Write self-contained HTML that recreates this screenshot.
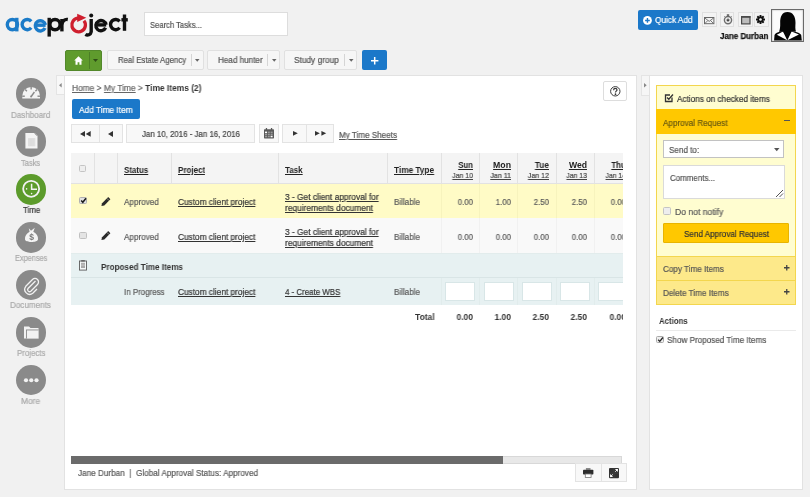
<!DOCTYPE html>
<html><head><meta charset="utf-8"><style>
*{box-sizing:border-box;margin:0;padding:0}
html,body{width:810px;height:497px;overflow:hidden}
body{background:#f1f1f1;font-family:"Liberation Sans",sans-serif;color:#555;position:relative}
.a{position:absolute}
.u{text-decoration:underline}
.t b{-webkit-text-stroke:0}
.t{line-height:12px;white-space:nowrap;transform-origin:0 0;will-change:transform;-webkit-text-stroke:0.2px currentColor}
.r{text-align:right;transform-origin:100% 0}
.c{text-align:center;transform-origin:50% 0}
.b{font-weight:bold}
svg{position:absolute;overflow:visible;will-change:transform}

.cb{background:#f4f4f4;border:1px solid #b9b9b9;border-radius:1.5px}
</style></head><body>
<svg style="left:0;top:0" width="140" height="45" viewBox="0 0 140 45">
<g fill="none" stroke="#1b7bc8" stroke-width="3.4">
<circle cx="12.4" cy="24.6" r="5.1"/>
<line x1="16.8" y1="17.8" x2="16.8" y2="31.4"/>
<path d="M31.2 21.4 A5.1 5.1 0 1 0 31.2 27.8"/>
<path d="M45 28 A5.1 5.1 0 1 1 45.4 24.9" />
<line x1="35.2" y1="25.2" x2="45.6" y2="25.2"/>
</g>
<g fill="none" stroke="#111" stroke-width="3.4">
<line x1="49.2" y1="17.8" x2="49.2" y2="36.6"/>
<circle cx="55" cy="24.6" r="5.1"/>
<line x1="61.9" y1="19" x2="61.9" y2="31.4"/>
<path d="M61.9 24.5 A5 5 0 0 1 67.8 19.5"/>
<line x1="91.2" y1="19" x2="91.2" y2="32.3"/>
<path d="M91.2 32 A3.8 3.8 0 0 1 85.4 34.4"/>
<path d="M105.6 27.8 A5.1 5.1 0 1 1 106 24.8" />
<line x1="95.8" y1="24.9" x2="106.2" y2="24.9"/>
<path d="M119.6 21.4 A5.1 5.1 0 1 0 119.6 27.8"/>
<line x1="124.5" y1="14.5" x2="124.5" y2="30.8"/>
<line x1="121.4" y1="19.8" x2="127.8" y2="19.8"/>
</g>
<circle cx="91.2" cy="15.6" r="2" fill="#111"/>
<path d="M83.9 20.7 A6.8 6.8 0 1 1 78.2 18.2" fill="none" stroke="#cf1f2e" stroke-width="3.3"/>
<path d="M77.2 13.8 L86.3 17.8 L77.2 21.9 Z" fill="#cf1f2e"/>
</svg>
<div class="a" style="left:144px;top:12px;width:143.5px;height:24px;background:#fff;border:1px solid #ddd"></div>
<div class="a t" style="left:150.40px;top:19.00px;font-size:8.7px;color:#555;transform:scaleX(0.8767);">Search Tasks...</div>
<div class="a" style="left:638.2px;top:9.6px;width:60.2px;height:20px;background:#1b78c9;border-radius:2px"></div>
<svg style="left:643.1px;top:16.1px" width="9" height="9" viewBox="0 0 9 9"><circle cx="4.45" cy="4.45" r="4.4" fill="#fff"/><path d="M4.45 2.1v4.7M2.1 4.45h4.7" stroke="#1b78c9" stroke-width="1.4"/></svg>
<div class="a t" style="left:655.30px;top:14.00px;font-size:9.2px;color:#fff;transform:scaleX(0.8966);">Quick Add</div>
<div class="a" style="left:702.2px;top:12.2px;width:14.8px;height:14.8px;background:#f3f3f3;border:1px solid #e0e0e0"></div>
<div class="a" style="left:719.6px;top:12.2px;width:14.8px;height:14.8px;background:#f3f3f3;border:1px solid #e0e0e0"></div>
<div class="a" style="left:737.8px;top:12.2px;width:14.8px;height:14.8px;background:#f3f3f3;border:1px solid #e0e0e0"></div>
<div class="a" style="left:754px;top:12.2px;width:14.8px;height:14.8px;background:#f3f3f3;border:1px solid #e0e0e0"></div>
<svg style="left:704.3px;top:16.5px" width="10.4" height="7.2" viewBox="0 0 10.4 7.2"><rect x="0.5" y="0.5" width="9.4" height="6.2" fill="none" stroke="#6a6a6a" stroke-width="1"/><path d="M0.6 0.8L5.2 4.4L9.8 0.8M0.8 6.6L3.9 3.5M9.6 6.6L6.5 3.5" fill="none" stroke="#6a6a6a" stroke-width="0.9"/></svg>
<svg style="left:722.5px;top:14.3px" width="10" height="11" viewBox="0 0 10 11"><circle cx="5" cy="6.1" r="3.6" fill="none" stroke="#6f6f6f" stroke-width="1.4"/><circle cx="5" cy="6.1" r="1.5" fill="#444"/><rect x="3.8" y="0.3" width="2.4" height="1.4" fill="#555"/><rect x="4.5" y="1.2" width="1" height="1.5" fill="#555"/><path d="M1.2 2.3l1.2 1.1M8.8 2.3l-1.2 1.1" stroke="#777" stroke-width="0.9"/><path d="M5 4.5V6.1" stroke="#ddd" stroke-width="0.5"/></svg>
<svg style="left:740.5px;top:15.5px" width="9.6" height="8.5" viewBox="0 0 9.6 8.5"><rect x="0.6" y="0.9" width="8.4" height="7" fill="#bdbdbd" stroke="#4a4a4a" stroke-width="1.2"/><rect x="0" y="0" width="9.6" height="1.6" fill="#4a4a4a"/></svg>
<svg style="left:756.4px;top:15.2px" width="9" height="9" viewBox="0 0 10 10"><g fill="#111"><circle cx="5" cy="5" r="3.4"/><rect x="3.9" y="0" width="2.2" height="10" rx="0.4"/><rect x="0" y="3.9" width="10" height="2.2" rx="0.4"/><rect x="3.9" y="0" width="2.2" height="10" rx="0.4" transform="rotate(45 5 5)"/><rect x="3.9" y="0" width="2.2" height="10" rx="0.4" transform="rotate(-45 5 5)"/></g><circle cx="5" cy="5" r="1.4" fill="#f3f3f3"/></svg>
<div class="a t" style="left:719.80px;top:31.00px;font-size:8.2px;color:#111;transform:scaleX(0.9765);font-weight:bold;-webkit-text-stroke:0;-webkit-text-stroke:0.25px #111;">Jane Durban</div>
<div class="a" style="left:771.1px;top:8.9px;width:33.3px;height:33px;background:#fbfbfb;border:1.4px solid #6a6a6a;box-shadow:inset 0 0 1.5px #888"></div>
<svg style="left:771.1px;top:8.9px" width="33.3" height="33" viewBox="0 0 33.3 33">
<path d="M3.1 31.4 L3.5 26 C4 24.5 6 23.5 9.5 22.5 L23.5 22.5 C27 23.5 29.5 24.5 30.2 26 L30.8 31.4 Z" fill="#050505"/>
<path d="M5.8 25.8 L12 22.6 L16.2 31.2 Z M28 25.5 L20.6 22.6 L16.4 31.2 Z" fill="#fff"/>
<path d="M16.5 3.1 C11 3.1 9 8 9.2 14 C9.3 18 9 20.5 8 22.8 L12.3 22.8 L16.2 28.6 L20.2 22.8 L25 22.6 C24 20 24.4 17 24.5 14 C24.7 8 22 3.1 16.5 3.1 Z" fill="#050505"/>
</svg>
<div class="a" style="left:65.2px;top:50px;width:37px;height:20.5px;background:#5f9b2d;border:1px solid #52882a;border-radius:2px"></div>
<div class="a" style="left:89.3px;top:52px;width:0.8px;height:16.5px;background:#4b7f25"></div>
<svg style="left:73.5px;top:55.5px" width="9" height="9" viewBox="0 0 9 9"><path d="M4.5 0.3L0.2 4.4H1.5V8.8H3.6V6.2H5.4V8.8H7.5V4.4H8.8Z" fill="#fff"/></svg>
<svg style="left:93px;top:59px" width="5" height="3"><path d="M0 0H5L2.5 3Z" fill="#2f4f17"/></svg>
<div class="a" style="left:107.2px;top:50px;width:96.60000000000001px;height:20.4px;background:#f6f6f6;border:1px solid #e0e0e0;border-radius:2px"></div>
<div class="a" style="left:191.2px;top:54px;width:0.8px;height:12px;background:#d5d5d5"></div>
<svg style="left:195.3px;top:59px" width="5" height="3"><path d="M0 0H4.5L2.25 2.8Z" fill="#666"/></svg>
<div class="a t" style="left:117.70px;top:54.00px;font-size:8.7px;color:#555;transform:scaleX(0.8982);">Real Estate Agency</div>
<div class="a" style="left:207px;top:50px;width:73.39999999999998px;height:20.4px;background:#f6f6f6;border:1px solid #e0e0e0;border-radius:2px"></div>
<div class="a" style="left:267.3px;top:54px;width:0.8px;height:12px;background:#d5d5d5"></div>
<svg style="left:271.65000000000003px;top:59px" width="5" height="3"><path d="M0 0H4.5L2.25 2.8Z" fill="#666"/></svg>
<div class="a t" style="left:218.10px;top:54.00px;font-size:8.7px;color:#555;transform:scaleX(0.9335);">Head hunter</div>
<div class="a" style="left:284.4px;top:50px;width:72.90000000000003px;height:20.4px;background:#f6f6f6;border:1px solid #e0e0e0;border-radius:2px"></div>
<div class="a" style="left:344.4px;top:54px;width:0.8px;height:12px;background:#d5d5d5"></div>
<svg style="left:348.65000000000003px;top:59px" width="5" height="3"><path d="M0 0H4.5L2.25 2.8Z" fill="#666"/></svg>
<div class="a t" style="left:294.40px;top:54.00px;font-size:8.7px;color:#555;transform:scaleX(0.9571);">Study group</div>
<div class="a" style="left:362.2px;top:50px;width:24.5px;height:20px;background:#1b78c9;border-radius:2px"></div>
<svg style="left:371px;top:56.7px" width="7.4" height="7.4"><path d="M3.7 0v7.4M0 3.7h7.4" stroke="#fff" stroke-width="1.5"/></svg>
<div class="a" style="left:64px;top:75px;width:573px;height:415px;background:#fff;border:1px solid #e2e2e2"></div>
<div class="a" style="left:56.2px;top:75.2px;width:8.3px;height:20.3px;background:#f8f8f8;border:1px solid #e4e4e4;border-right:none"></div>
<svg style="left:59.2px;top:83.3px" width="3" height="4.5"><path d="M2.7 0V4.4L0 2.2Z" fill="#888"/></svg>
<div class="a" style="left:640.9px;top:75.2px;width:8.8px;height:20.5px;background:#f6f6f6;border:1px solid #e4e4e4;border-right:none"></div>
<svg style="left:643.8px;top:83.4px" width="3" height="4.5"><path d="M0 0V4.4L2.7 2.2Z" fill="#888"/></svg>
<div class="a" style="left:649.3px;top:75px;width:153.5px;height:415px;background:#fff;border:1px solid #e2e2e2"></div>
<div class="a" style="left:15.6px;top:78px;width:30.5px;height:30.5px;background:#8a8a8a;border-radius:50%"></div>
<div class="a t" style="left:11.00px;top:109.00px;font-size:8.7px;color:#aaa;transform:scaleX(0.9234);">Dashboard</div>
<div class="a" style="left:15.6px;top:126px;width:30.5px;height:30.5px;background:#8a8a8a;border-radius:50%"></div>
<div class="a t" style="left:21.20px;top:157.00px;font-size:8.7px;color:#aaa;transform:scaleX(0.8634);">Tasks</div>
<div class="a" style="left:15.6px;top:174px;width:30.5px;height:30.5px;background:#5c9b2b;border-radius:50%"></div>
<div class="a t" style="left:22.60px;top:204.00px;font-size:8.7px;color:#333;transform:scaleX(0.9048);">Time</div>
<div class="a" style="left:15.6px;top:222px;width:30.5px;height:30.5px;background:#8a8a8a;border-radius:50%"></div>
<div class="a t" style="left:14.60px;top:252.00px;font-size:8.7px;color:#aaa;transform:scaleX(0.8480);">Expenses</div>
<div class="a" style="left:15.6px;top:269.5px;width:30.5px;height:30.5px;background:#8a8a8a;border-radius:50%"></div>
<div class="a t" style="left:10.40px;top:299.00px;font-size:8.7px;color:#aaa;transform:scaleX(0.9318);">Documents</div>
<div class="a" style="left:15.6px;top:317px;width:30.5px;height:30.5px;background:#8a8a8a;border-radius:50%"></div>
<div class="a t" style="left:16.70px;top:347.00px;font-size:8.7px;color:#aaa;transform:scaleX(0.9069);">Projects</div>
<div class="a" style="left:15.6px;top:364.5px;width:30.5px;height:30.5px;background:#8a8a8a;border-radius:50%"></div>
<div class="a t" style="left:21.10px;top:395.00px;font-size:8.7px;color:#aaa;transform:scaleX(0.9637);">More</div>
<svg style="left:15.6px;top:78px" width="30.5" height="30.5" viewBox="0 0 30.5 30.5">
<path d="M6.3 17.8 A8.85 8.85 0 0 1 24 17.8 V20.6 H6.3 Z" fill="#f4f4f4"/>
<g stroke="#8a8a8a" stroke-width="1.4"><line x1="15.15" y1="9" x2="15.15" y2="11.6"/><line x1="9.2" y1="11.6" x2="10.9" y2="13.3"/><line x1="21.1" y1="11.6" x2="19.4" y2="13.3"/><line x1="6.2" y1="18.2" x2="8.8" y2="18.2"/><line x1="24.1" y1="18.2" x2="21.5" y2="18.2"/><line x1="15.2" y1="18.5" x2="18.4" y2="14"/></g>
<circle cx="15.1" cy="18.6" r="1" fill="#8a8a8a"/>
</svg>
<svg style="left:15.6px;top:126px" width="30.5" height="30.5" viewBox="0 0 30.5 30.5">
<path d="M9.4 6.9 H18.7 L21.5 9.7 V22.5 H9.4 Z" fill="#f4f4f4"/>
<path d="M18.5 7.3 L21.1 9.9" stroke="#999" stroke-width="0.9"/>
<rect x="12.4" y="12.2" width="6.8" height="8" fill="#d2d2d2"/>
<g stroke="#f4f4f4" stroke-width="0.45"><line x1="13.6" y1="12.2" x2="13.6" y2="20.2"/><line x1="14.8" y1="12.2" x2="14.8" y2="20.2"/><line x1="16" y1="12.2" x2="16" y2="20.2"/><line x1="17.2" y1="12.2" x2="17.2" y2="20.2"/><line x1="18.4" y1="12.2" x2="18.4" y2="20.2"/></g>
</svg>
<svg style="left:15.6px;top:174px" width="30.5" height="30.5" viewBox="0 0 30.5 30.5">
<circle cx="15.15" cy="14.8" r="8" fill="none" stroke="#f2f2f2" stroke-width="1.8"/>
<path d="M15.6 9.8 V15.3 H21" fill="none" stroke="#f2f2f2" stroke-width="1.5"/>
<circle cx="15.6" cy="19.6" r="0.8" fill="#f2f2f2"/><circle cx="10.6" cy="14.9" r="0.8" fill="#f2f2f2"/>
</svg>
<svg style="left:15.6px;top:222px" width="30.5" height="30.5" viewBox="0 0 30.5 30.5">
<path d="M12.8 6.3 L15 8.8 L18.8 5.8 L17.3 9.8 C20.5 11.3 22.3 14.5 22 17.3 C21.7 19.3 19 20 15.4 20 C11.8 20 9.2 19.3 9 17.3 C8.7 14.5 10.5 11.3 13.6 9.8 Z" fill="#f4f4f4"/>
<text x="15.5" y="17.6" font-family="Liberation Sans" font-weight="bold" font-size="8.5" fill="#7a7a7a" text-anchor="middle">$</text>
</svg>
<svg style="left:15.6px;top:269.5px" width="30.5" height="30.5" viewBox="0 0 30.5 30.5">
<path d="M19.5 11 L12 18.5 A2 2 0 0 0 14.8 21.3 L21.5 14.5 A3.5 3.5 0 0 0 16.5 9.5 L9.8 16.3 A5 5 0 0 0 16.8 23.3 L21 19" fill="none" stroke="#f2f2f2" stroke-width="1.3" transform="rotate(0)"/>
</svg>
<svg style="left:15.6px;top:317px" width="30.5" height="30.5" viewBox="0 0 30.5 30.5">
<path d="M8 9.5 H13 L14.5 11 H22.5 V21.5 H8 Z" fill="#f2f2f2"/>
<rect x="10" y="12.5" width="12.5" height="9" fill="#8a8a8a"/>
<rect x="10.9" y="13.4" width="11.6" height="8.1" fill="#f2f2f2"/>
</svg>
<svg style="left:15.6px;top:364.5px" width="30.5" height="30.5" viewBox="0 0 30.5 30.5">
<circle cx="10" cy="15.25" r="2.1" fill="#f2f2f2"/><circle cx="15.25" cy="15.25" r="2.1" fill="#f2f2f2"/><circle cx="20.5" cy="15.25" r="2.1" fill="#f2f2f2"/>
</svg>
<div class="a t" style="left:71.8px;top:82px;font-size:8.7px;color:#666;transform:scaleX(0.9654)"><span class="u">Home</span> &gt; <span class="u">My Time</span> &gt; <b style="color:#333">Time Items (2)</b></div>
<div class="a" style="left:602.7px;top:80.5px;width:24.6px;height:20px;background:#fff;border:1px solid #ddd;border-radius:2px"></div>
<svg style="left:609.5px;top:85.6px" width="11" height="11" viewBox="0 0 11 11"><circle cx="5.3" cy="5.3" r="4.7" fill="none" stroke="#3a3a3a" stroke-width="1"/><path d="M3.6 4.2 C3.6 2.9 4.3 2.4 5.3 2.4 C6.3 2.4 7 3 7 3.9 C7 5.1 5.4 5.2 5.4 6.6" fill="none" stroke="#3a3a3a" stroke-width="1.25"/><circle cx="5.5" cy="8.2" r="0.85" fill="#333"/></svg>
<div class="a" style="left:71.6px;top:99.2px;width:68.1px;height:20.2px;background:#1b78c9;border-radius:2px"></div>
<div class="a t" style="left:78.80px;top:104.00px;font-size:8.7px;color:#fff;transform:scaleX(0.9575);">Add Time Item</div>
<div class="a" style="left:71.2px;top:124.2px;width:51.5px;height:18.5px;background:#f8f8f8;border:1px solid #e3e3e3"></div>
<div class="a" style="left:99.2px;top:124.2px;width:1px;height:18.5px;background:#e3e3e3"></div>
<svg style="left:79.5px;top:130.7px" width="11" height="6"><path d="M0 2.9L5 0V5.8Z M5.7 2.9L10.7 0V5.8Z" fill="#333"/></svg>
<svg style="left:108px;top:130.5px" width="6" height="6"><path d="M0 3L5 0V6Z" fill="#333"/></svg>
<div class="a" style="left:126.2px;top:124.2px;width:129px;height:18.5px;background:#f8f8f8;border:1px solid #e3e3e3"></div>
<div class="a t" style="left:141.80px;top:128.00px;font-size:8.7px;color:#444;transform:scaleX(0.9054);">Jan 10, 2016 - Jan 16, 2016</div>
<div class="a" style="left:258.9px;top:124.2px;width:19.8px;height:18.5px;background:#f8f8f8;border:1px solid #e3e3e3"></div>
<svg style="left:264.2px;top:128.3px" width="10" height="10.4" viewBox="0 0 10 10.4"><rect x="0" y="1.2" width="10" height="9.2" rx="0.6" fill="#5a5a5a"/><rect x="1.8" y="0" width="1.3" height="2.4" fill="#5a5a5a"/><rect x="6.9" y="0" width="1.3" height="2.4" fill="#5a5a5a"/><rect x="1.0" y="3.6" width="2" height="1.5" fill="#fff"/><rect x="3.8" y="3.6" width="2" height="1.5" fill="#9a9a9a"/><rect x="6.6" y="3.6" width="2" height="1.5" fill="#9a9a9a"/><rect x="1.0" y="5.7" width="2" height="1.5" fill="#9a9a9a"/><rect x="3.8" y="5.7" width="2" height="1.5" fill="#9a9a9a"/><rect x="6.6" y="5.7" width="2" height="1.5" fill="#9a9a9a"/><rect x="1.0" y="7.8" width="2" height="1.5" fill="#9a9a9a"/><rect x="3.8" y="7.8" width="2" height="1.5" fill="#9a9a9a"/><rect x="6.6" y="7.8" width="2" height="1.5" fill="#fff"/></svg>
<div class="a" style="left:282.2px;top:124.2px;width:51.7px;height:18.5px;background:#f8f8f8;border:1px solid #e3e3e3"></div>
<div class="a" style="left:306.4px;top:124.2px;width:1px;height:18.5px;background:#e3e3e3"></div>
<svg style="left:292.8px;top:131.2px" width="5" height="5"><path d="M4.8 2.3L0 0V4.7Z" fill="#333"/></svg>
<svg style="left:315px;top:131.2px" width="12" height="5"><path d="M4.8 2.3L0 0V4.7Z M11.2 2.3L6.4 0V4.7Z" fill="#333"/></svg>
<div class="a t" style="left:338.60px;top:129.00px;font-size:8.7px;color:#555;transform:scaleX(0.9316);text-decoration:underline;">My Time Sheets</div>
<div class="a" style="left:71px;top:153.2px;width:552px;height:30.4px;background:#f4f4f4;border-bottom:1px solid #e2e2e2"></div>
<div class="a" style="left:71px;top:183.6px;width:552px;height:34.8px;background:#fffbc6"></div>
<div class="a" style="left:71px;top:218.4px;width:552px;height:34.9px;background:#f9f9f9"></div>
<div class="a" style="left:71px;top:253.3px;width:552px;height:24.9px;background:#e7f1f2;border-top:1px solid #e2ecec;border-bottom:1px solid #d9e5e6"></div>
<div class="a" style="left:71px;top:278.2px;width:552px;height:26.4px;background:#e7f1f2"></div>
<div class="a" style="left:94.3px;top:153.2px;width:1px;height:30.4px;background:#e2e2e2"></div>
<div class="a" style="left:117.1px;top:153.2px;width:1px;height:30.4px;background:#e2e2e2"></div>
<div class="a" style="left:170.6px;top:153.2px;width:1px;height:30.4px;background:#e2e2e2"></div>
<div class="a" style="left:278.4px;top:153.2px;width:1px;height:30.4px;background:#e2e2e2"></div>
<div class="a" style="left:387.1px;top:153.2px;width:1px;height:30.4px;background:#e2e2e2"></div>
<div class="a" style="left:441.2px;top:153.2px;width:1px;height:30.4px;background:#e2e2e2"></div>
<div class="a" style="left:479.4px;top:153.2px;width:1px;height:30.4px;background:#e2e2e2"></div>
<div class="a" style="left:517.4px;top:153.2px;width:1px;height:30.4px;background:#e2e2e2"></div>
<div class="a" style="left:555.8px;top:153.2px;width:1px;height:30.4px;background:#e2e2e2"></div>
<div class="a" style="left:594.2px;top:153.2px;width:1px;height:30.4px;background:#e2e2e2"></div>
<div class="a" style="left:441.2px;top:183.6px;width:1px;height:34.8px;background:#f7f3bd"></div>
<div class="a" style="left:441.2px;top:218.4px;width:1px;height:34.9px;background:#f1f1f1"></div>
<div class="a" style="left:441.2px;top:278.2px;width:1px;height:26.4px;background:#e1ecec"></div>
<div class="a" style="left:479.4px;top:183.6px;width:1px;height:34.8px;background:#f7f3bd"></div>
<div class="a" style="left:479.4px;top:218.4px;width:1px;height:34.9px;background:#f1f1f1"></div>
<div class="a" style="left:479.4px;top:278.2px;width:1px;height:26.4px;background:#e1ecec"></div>
<div class="a" style="left:517.4px;top:183.6px;width:1px;height:34.8px;background:#f7f3bd"></div>
<div class="a" style="left:517.4px;top:218.4px;width:1px;height:34.9px;background:#f1f1f1"></div>
<div class="a" style="left:517.4px;top:278.2px;width:1px;height:26.4px;background:#e1ecec"></div>
<div class="a" style="left:555.8px;top:183.6px;width:1px;height:34.8px;background:#f7f3bd"></div>
<div class="a" style="left:555.8px;top:218.4px;width:1px;height:34.9px;background:#f1f1f1"></div>
<div class="a" style="left:555.8px;top:278.2px;width:1px;height:26.4px;background:#e1ecec"></div>
<div class="a" style="left:594.2px;top:183.6px;width:1px;height:34.8px;background:#f7f3bd"></div>
<div class="a" style="left:594.2px;top:218.4px;width:1px;height:34.9px;background:#f1f1f1"></div>
<div class="a" style="left:594.2px;top:278.2px;width:1px;height:26.4px;background:#e1ecec"></div>
<div class="a" style="left:78.9px;top:164.8px;width:7.5px;height:7.5px;background:#eee;border:1px solid #c4c4c4;border-radius:1.5px"></div>
<div class="a t" style="left:123.70px;top:164.00px;font-size:8.5px;color:#222;transform:scaleX(0.9316);font-weight:bold;-webkit-text-stroke:0;text-decoration:underline;">Status</div>
<div class="a t" style="left:177.50px;top:164.00px;font-size:8.5px;color:#222;transform:scaleX(0.9439);font-weight:bold;-webkit-text-stroke:0;text-decoration:underline;">Project</div>
<div class="a t" style="left:285.20px;top:164.00px;font-size:8.5px;color:#222;transform:scaleX(0.9390);font-weight:bold;-webkit-text-stroke:0;text-decoration:underline;">Task</div>
<div class="a t" style="left:393.80px;top:164.00px;font-size:8.5px;color:#222;transform:scaleX(0.9720);font-weight:bold;-webkit-text-stroke:0;text-decoration:underline;">Time Type</div>
<div class="a t r" style="left:172.80px;width:300px;top:159.00px;font-size:8.5px;color:#222;transform:scaleX(0.9219);font-weight:bold;-webkit-text-stroke:0;text-decoration:underline;">Sun</div>
<div class="a t r" style="left:172.80px;width:300px;top:170.00px;font-size:7.8px;color:#444;transform:scaleX(0.8881);text-decoration:underline;">Jan 10</div>
<div class="a t r" style="left:210.90px;width:300px;top:159.00px;font-size:8.5px;color:#222;transform:scaleX(1.0249);font-weight:bold;-webkit-text-stroke:0;text-decoration:underline;">Mon</div>
<div class="a t r" style="left:210.90px;width:300px;top:170.00px;font-size:7.8px;color:#444;transform:scaleX(0.9062);text-decoration:underline;">Jan 11</div>
<div class="a t r" style="left:249.10px;width:300px;top:159.00px;font-size:8.5px;color:#222;transform:scaleX(0.9737);font-weight:bold;-webkit-text-stroke:0;text-decoration:underline;">Tue</div>
<div class="a t r" style="left:249.10px;width:300px;top:170.00px;font-size:7.8px;color:#444;transform:scaleX(0.9009);text-decoration:underline;">Jan 12</div>
<div class="a t r" style="left:287.30px;width:300px;top:159.00px;font-size:8.5px;color:#222;transform:scaleX(1.0175);font-weight:bold;-webkit-text-stroke:0;text-decoration:underline;">Wed</div>
<div class="a t r" style="left:287.30px;width:300px;top:170.00px;font-size:7.8px;color:#444;transform:scaleX(0.8838);text-decoration:underline;">Jan 13</div>
<div class="a t r" style="left:325.50px;width:300px;top:159.00px;font-size:8.5px;color:#222;transform:scaleX(0.9501);font-weight:bold;-webkit-text-stroke:0;text-decoration:underline;">Thu</div>
<div class="a t r" style="left:325.50px;width:300px;top:170.00px;font-size:7.8px;color:#444;transform:scaleX(0.8753);text-decoration:underline;">Jan 14</div>
<div class="a" style="left:79.2px;top:197.2px;width:7.7px;height:7.3px;background:#e2e2e2;border:1px solid #b0b0b0;border-radius:1.5px"></div>
<svg style="left:79.7px;top:197.3px" width="7" height="7"><path d="M1.2 3.6L2.8 5.3L6 1.2" fill="none" stroke="#1a1a1a" stroke-width="1.5"/></svg>
<svg style="left:101.2px;top:196.5px" width="10" height="10" viewBox="0 0 10 10"><path d="M0.4 9.1 L1.1 6.2 L7.2 0.1 L9.4 2.3 L3.3 8.4 Z" fill="#2a2a2a"/><path d="M5.9 1.4 L8.1 3.6" stroke="#fffcc8" stroke-width="0.7" opacity="0.7"/></svg>
<div class="a t" style="left:124.00px;top:196.00px;font-size:8.7px;color:#5a5a5a;transform:scaleX(0.9371);">Approved</div>
<div class="a t" style="left:177.50px;top:196.00px;font-size:8.7px;color:#333;transform:scaleX(0.9541);text-decoration:underline;">Custom client project</div>
<div class="a t" style="left:285.20px;top:191.00px;font-size:8.7px;color:#333;transform:scaleX(0.9603);text-decoration:underline;">3 - Get client approval for</div>
<div class="a t" style="left:285.20px;top:202.00px;font-size:8.7px;color:#333;transform:scaleX(0.9640);text-decoration:underline;">requirements document</div>
<div class="a t" style="left:393.80px;top:196.00px;font-size:8.7px;color:#5a5a5a;transform:scaleX(0.9269);">Billable</div>
<div class="a t r" style="left:172.80px;width:300px;top:196.00px;font-size:8.7px;color:#5a5a5a;transform:scaleX(0.8977);">0.00</div>
<div class="a t r" style="left:210.90px;width:300px;top:196.00px;font-size:8.7px;color:#5a5a5a;transform:scaleX(0.8977);">1.00</div>
<div class="a t r" style="left:249.10px;width:300px;top:196.00px;font-size:8.7px;color:#5a5a5a;transform:scaleX(0.8977);">2.50</div>
<div class="a t r" style="left:287.30px;width:300px;top:196.00px;font-size:8.7px;color:#5a5a5a;transform:scaleX(0.8977);">2.50</div>
<div class="a t r" style="left:325.50px;width:300px;top:196.00px;font-size:8.7px;color:#5a5a5a;transform:scaleX(0.8977);">0.00</div>
<div class="a" style="left:79.2px;top:232px;width:7.7px;height:7.3px;background:#e4e4e4;border:1px solid #c0c0c0;border-radius:1.5px"></div>
<svg style="left:101.2px;top:231.3px" width="10" height="10" viewBox="0 0 10 10"><path d="M0.4 9.1 L1.1 6.2 L7.2 0.1 L9.4 2.3 L3.3 8.4 Z" fill="#2a2a2a"/><path d="M5.9 1.4 L8.1 3.6" stroke="#f9f9f9" stroke-width="0.7" opacity="0.7"/></svg>
<div class="a t" style="left:124.00px;top:231.00px;font-size:8.7px;color:#5a5a5a;transform:scaleX(0.9371);">Approved</div>
<div class="a t" style="left:177.50px;top:231.00px;font-size:8.7px;color:#333;transform:scaleX(0.9541);text-decoration:underline;">Custom client project</div>
<div class="a t" style="left:285.20px;top:226.00px;font-size:8.7px;color:#333;transform:scaleX(0.9603);text-decoration:underline;">3 - Get client approval for</div>
<div class="a t" style="left:285.20px;top:237.00px;font-size:8.7px;color:#333;transform:scaleX(0.9640);text-decoration:underline;">requirements document</div>
<div class="a t" style="left:393.80px;top:231.00px;font-size:8.7px;color:#5a5a5a;transform:scaleX(0.9269);">Billable</div>
<div class="a t r" style="left:172.80px;width:300px;top:231.00px;font-size:8.7px;color:#5a5a5a;transform:scaleX(0.8977);">0.00</div>
<div class="a t r" style="left:210.90px;width:300px;top:231.00px;font-size:8.7px;color:#5a5a5a;transform:scaleX(0.8977);">0.00</div>
<div class="a t r" style="left:249.10px;width:300px;top:231.00px;font-size:8.7px;color:#5a5a5a;transform:scaleX(0.8977);">0.00</div>
<div class="a t r" style="left:287.30px;width:300px;top:231.00px;font-size:8.7px;color:#5a5a5a;transform:scaleX(0.8977);">0.00</div>
<div class="a t r" style="left:325.50px;width:300px;top:231.00px;font-size:8.7px;color:#5a5a5a;transform:scaleX(0.8977);">0.00</div>
<svg style="left:79px;top:260.3px" width="8" height="10.6" viewBox="0 0 8 10.6"><rect x="0.5" y="1" width="7" height="9.1" fill="#f4f8f8" stroke="#5a5a5a" stroke-width="0.9"/><rect x="2.2" y="0.2" width="3.6" height="1.3" fill="#5a5a5a"/><rect x="2" y="2.8" width="4" height="5.2" fill="#a8a8a8"/><path d="M2 4.2H6M2 5.6H6" stroke="#e0e0e0" stroke-width="0.4"/></svg>
<div class="a t" style="left:101.10px;top:261.00px;font-size:8.7px;color:#333;transform:scaleX(0.9347);font-weight:bold;-webkit-text-stroke:0;">Proposed Time Items</div>
<div class="a t" style="left:123.60px;top:286.00px;font-size:8.7px;color:#5a5a5a;transform:scaleX(0.9127);">In Progress</div>
<div class="a t" style="left:177.50px;top:286.00px;font-size:8.7px;color:#333;transform:scaleX(0.9541);text-decoration:underline;">Custom client project</div>
<div class="a t" style="left:285.20px;top:286.00px;font-size:8.7px;color:#333;transform:scaleX(0.9094);text-decoration:underline;">4 - Create WBS</div>
<div class="a t" style="left:393.80px;top:286.00px;font-size:8.7px;color:#5a5a5a;transform:scaleX(0.9269);">Billable</div>
<div class="a" style="left:445.3px;top:282.4px;width:30.1px;height:18.4px;background:#fff;border:1px solid #d8e6e7"></div>
<div class="a" style="left:483.5px;top:282.4px;width:30.1px;height:18.4px;background:#fff;border:1px solid #d8e6e7"></div>
<div class="a" style="left:521.7px;top:282.4px;width:30.1px;height:18.4px;background:#fff;border:1px solid #d8e6e7"></div>
<div class="a" style="left:559.9px;top:282.4px;width:30.1px;height:18.4px;background:#fff;border:1px solid #d8e6e7"></div>
<div class="a" style="left:598.1px;top:282.4px;width:30.1px;height:18.4px;background:#fff;border:1px solid #d8e6e7"></div>
<div class="a t" style="left:415.40px;top:311.00px;font-size:8.7px;color:#333;transform:scaleX(0.9734);font-weight:bold;-webkit-text-stroke:0;">Total</div>
<div class="a t r" style="left:172.80px;width:300px;top:311.00px;font-size:8.7px;color:#333;transform:scaleX(0.9686);font-weight:bold;-webkit-text-stroke:0;">0.00</div>
<div class="a t r" style="left:210.90px;width:300px;top:311.00px;font-size:8.7px;color:#333;transform:scaleX(0.9686);font-weight:bold;-webkit-text-stroke:0;">1.00</div>
<div class="a t r" style="left:249.10px;width:300px;top:311.00px;font-size:8.7px;color:#333;transform:scaleX(0.9686);font-weight:bold;-webkit-text-stroke:0;">2.50</div>
<div class="a t r" style="left:287.30px;width:300px;top:311.00px;font-size:8.7px;color:#333;transform:scaleX(0.9686);font-weight:bold;-webkit-text-stroke:0;">2.50</div>
<div class="a t r" style="left:325.50px;width:300px;top:311.00px;font-size:8.7px;color:#333;transform:scaleX(0.9686);font-weight:bold;-webkit-text-stroke:0;">0.00</div>
<div class="a" style="left:623px;top:150px;width:12px;height:180px;background:#fff"></div>
<div class="a" style="left:71.2px;top:456.2px;width:551px;height:7.4px;background:#e8e8e8;border:1px solid #d8d8d8"></div>
<div class="a" style="left:71.2px;top:456.2px;width:431.6px;height:7.4px;background:#6b6b6b"></div>
<div class="a t" style="left:77.70px;top:467.00px;font-size:8.7px;color:#5a5a5a;transform:scaleX(0.9398);">Jane Durban&nbsp; |&nbsp; Global Approval Status: Approved</div>
<div class="a" style="left:574.7px;top:463.2px;width:52.3px;height:18.7px;background:#f8f8f8;border:1px solid #e3e3e3"></div>
<div class="a" style="left:600.7px;top:463.2px;width:1px;height:18.7px;background:#e3e3e3"></div>
<svg style="left:582.8px;top:468px" width="10.4" height="9.8" viewBox="0 0 10.4 9.8"><rect x="2.9" y="0" width="4.6" height="1.9" fill="#8a8a8a"/><rect x="0" y="1.7" width="10.4" height="4.9" rx="0.8" fill="#2c2c2c"/><rect x="2.3" y="6" width="5.8" height="3.6" fill="#fff" stroke="#777" stroke-width="0.8"/></svg>
<svg style="left:609px;top:467.7px" width="10" height="10.2" viewBox="0 0 10 10.2"><rect x="0" y="0" width="10" height="10.2" rx="1" fill="#333"/><path d="M5 0.3V9.9M0.3 5.1H9.7" stroke="#4a4a4a" stroke-width="0.5"/><path d="M5.9 1.1H8.9V4.1Z M4.1 9.1H1.1V6.1Z" fill="#fff"/><path d="M8.6 1.4L6.2 3.8M1.4 8.8L3.8 6.4" stroke="#fff" stroke-width="0.9"/></svg>
<div class="a" style="left:656px;top:85px;width:140px;height:220px;background:#fffdd0;border:1px solid #f3d64e"></div>
<svg style="left:664px;top:92.5px" width="10" height="10" viewBox="0 0 10 10"><path d="M8 4.5V8.5H1.5V2H6" fill="none" stroke="#333" stroke-width="1.3"/><path d="M3 4.5L4.8 6.3L9 1.5" fill="none" stroke="#333" stroke-width="1.3"/></svg>
<div class="a t" style="left:676.60px;top:93.00px;font-size:8.7px;color:#333;transform:scaleX(0.9418);">Actions on checked items</div>
<div class="a" style="left:656px;top:109.1px;width:140px;height:24.9px;background:#ffc800"></div>
<div class="a t" style="left:663.10px;top:117.00px;font-size:8.7px;color:#6a5a10;transform:scaleX(0.9341);">Approval Request</div>
<div class="a" style="left:784.4px;top:119.8px;width:5.2px;height:1.5px;background:#555"></div>
<div class="a" style="left:663px;top:140.2px;width:120.7px;height:18px;background:#fff;border:1px solid #c2c2c2"></div>
<div class="a t" style="left:668.60px;top:144.00px;font-size:8.7px;color:#555;transform:scaleX(0.9319);">Send to:</div>
<svg style="left:774px;top:148px" width="6" height="4"><path d="M0 0H5.5L2.75 3.2Z" fill="#555"/></svg>
<div class="a" style="left:663px;top:164.6px;width:122px;height:34.7px;background:#fff;border:1px solid #dadada"></div>
<div class="a t" style="left:669.80px;top:172.00px;font-size:8.7px;color:#555;transform:scaleX(0.9146);">Comments...</div>
<svg style="left:775px;top:189px" width="9" height="9"><path d="M1 8L8 1M4.5 8L8 4.5" stroke="#555" stroke-width="1"/></svg>
<div class="a" style="left:663px;top:207px;width:8px;height:8px;background:#eee;border:1px solid #c4c4c4;border-radius:1.5px"></div>
<div class="a t" style="left:674.60px;top:206.00px;font-size:8.7px;color:#5a5a5a;transform:scaleX(0.9889);">Do not notify</div>
<div class="a" style="left:663px;top:223px;width:126.3px;height:20.2px;background:#ffc800;border:1px solid #e8b400;border-radius:1px"></div>
<div class="a t" style="left:683.60px;top:228.00px;font-size:8.7px;color:#333;transform:scaleX(0.9320);">Send Approval Request</div>
<div class="a" style="left:656px;top:256px;width:140px;height:49px;background:#fde98a;border:1px solid #f3d64e"></div>
<div class="a" style="left:656px;top:280.1px;width:140px;height:1px;background:#f3d64e"></div>
<div class="a t" style="left:663.10px;top:263.00px;font-size:8.7px;color:#555;transform:scaleX(0.9346);">Copy Time Items</div>
<div class="a t" style="left:663.10px;top:287.00px;font-size:8.7px;color:#555;transform:scaleX(0.9386);">Delete Time Items</div>
<svg style="left:784.4px;top:264.5px" width="5.5" height="5.5"><path d="M2.75 0v5.5M0 2.75h5.5" stroke="#444" stroke-width="1.3"/></svg>
<svg style="left:784.4px;top:288.5px" width="5.5" height="5.5"><path d="M2.75 0v5.5M0 2.75h5.5" stroke="#444" stroke-width="1.3"/></svg>
<div class="a t" style="left:658.50px;top:315.00px;font-size:8.7px;color:#333;transform:scaleX(0.8996);font-weight:bold;-webkit-text-stroke:0;">Actions</div>
<div class="a" style="left:656px;top:329.5px;width:140px;height:1px;background:#eaeaea"></div>
<div class="a" style="left:656px;top:335.8px;width:7.8px;height:6.8px;background:#eee;border:1px solid #a9a9a9;border-radius:1.5px"></div>
<svg style="left:656.5px;top:335.5px" width="7" height="7"><path d="M1.2 3.8L2.8 5.4L5.9 1.5" fill="none" stroke="#222" stroke-width="1.3"/></svg>
<div class="a t" style="left:667.40px;top:334.00px;font-size:8.7px;color:#555;transform:scaleX(0.9344);">Show Proposed Time Items</div>
</body></html>
